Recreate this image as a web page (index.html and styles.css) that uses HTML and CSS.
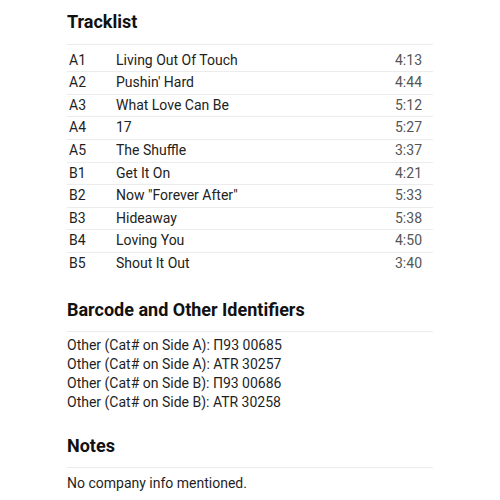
FILE: index.html
```html
<!DOCTYPE html>
<html>
<head>
<meta charset="utf-8">
<link rel="stylesheet" href="styles.css">
</head>
<body>
<main class="page">
  <section class="section">
    <h2 class="section-title">Tracklist</h2>
    <table class="tracklist">
      <tbody>
        <tr><td class="pos">A1</td><td class="title">Living Out Of Touch</td><td class="dur">4:13</td></tr>
        <tr><td class="pos">A2</td><td class="title">Pushin' Hard</td><td class="dur">4:44</td></tr>
        <tr><td class="pos">A3</td><td class="title">What Love Can Be</td><td class="dur">5:12</td></tr>
        <tr><td class="pos">A4</td><td class="title">17</td><td class="dur">5:27</td></tr>
        <tr><td class="pos">A5</td><td class="title">The Shuffle</td><td class="dur">3:37</td></tr>
        <tr><td class="pos">B1</td><td class="title">Get It On</td><td class="dur">4:21</td></tr>
        <tr><td class="pos">B2</td><td class="title">Now "Forever After"</td><td class="dur">5:33</td></tr>
        <tr><td class="pos">B3</td><td class="title">Hideaway</td><td class="dur">5:38</td></tr>
        <tr><td class="pos">B4</td><td class="title">Loving You</td><td class="dur">4:50</td></tr>
        <tr><td class="pos">B5</td><td class="title">Shout It Out</td><td class="dur">3:40</td></tr>
      </tbody>
    </table>
  </section>
  <section class="section">
    <h2 class="section-title">Barcode and Other Identifiers</h2>
    <ul class="ids">
      <li>Other (Cat# on Side A): П93 00685</li>
      <li>Other (Cat# on Side A): ATR 30257</li>
      <li>Other (Cat# on Side B): П93 00686</li>
      <li>Other (Cat# on Side B): ATR 30258</li>
    </ul>
  </section>
  <section class="section notes-section">
    <h2 class="section-title">Notes</h2>
    <p class="notes">No company info mentioned.</p>
  </section>
</main>
</body>
</html>
```
FILE: styles.css
```css
html, body {
  margin: 0;
  padding: 0;
  background: #fff;
}
body {
  font-family: Roboto, "Liberation Sans", sans-serif;
  color: #1f1f1f;
}
.page {
  width: 366px;
  margin-left: 67px;
  padding-top: 11px;
}
.section + .section {
  margin-top: 24px;
}
.section + .notes-section {
  margin-top: 23px;
}
.section-title {
  margin: 0;
  font-size: 18px;
  font-weight: 700;
  line-height: 21.6px;
  color: #111;
  padding-bottom: 11px;
  border-bottom: 1px solid #ececec;
}
.tracklist {
  width: 100%;
  border-collapse: collapse;
  margin-top: 5px;
  font-size: 14px;
}
.tracklist td {
  padding: 0;
  line-height: 21.6px;
}
.tracklist tr + tr td {
  border-top: 1px solid #ececec;
}
.pos {
  width: 49px;
  padding-left: 2px !important;
  box-sizing: border-box;
}
.title {
  color: #222;
}
.dur {
  text-align: right;
  color: #555;
  padding-right: 11px !important;
}
.ids {
  list-style: none;
  margin: 4px 0 0;
  padding: 0;
  font-size: 14px;
  line-height: 18.9px;
}
.notes {
  margin: 5px 0 0;
  font-size: 14px;
  line-height: 21px;
}
```
